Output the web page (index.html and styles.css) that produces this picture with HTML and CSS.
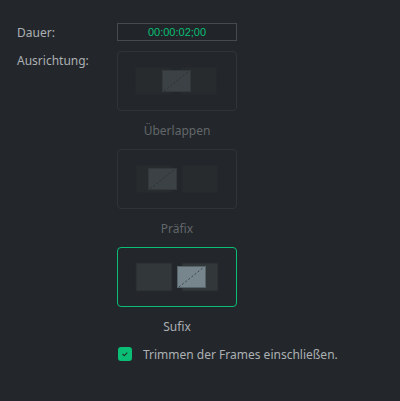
FILE: index.html
```html
<!DOCTYPE html>
<html lang="de">
<head>
  <meta charset="utf-8">
  <title>Übergang</title>
  <link rel="stylesheet" href="styles.css">
</head>
<body>

<form class="settings">
  <label class="name" for="duration">Dauer:</label>
  <input class="timecode" id="duration" type="text" value="00:00:02;00">

  <span class="name" id="align-name">Ausrichtung:</span>
  <div class="options" role="radiogroup" aria-labelledby="align-name">

    <label class="option">
      <input type="radio" name="align" value="overlap">
      <span class="card">
        <svg viewBox="1 1 118 58" aria-hidden="true">
          <rect class="clip" x="18" y="16" width="37" height="28"/>
          <rect class="clip" x="64" y="16" width="36" height="28"/>
          <rect class="fade" x="45.5" y="19.5" width="28" height="21"/>
          <path class="cut" d="M47 40L72 20"/>
        </svg>
      </span>
      <span class="caption">Überlappen</span>
    </label>

    <label class="option">
      <input type="radio" name="align" value="prefix">
      <span class="card">
        <svg viewBox="1 1 118 58" aria-hidden="true">
          <rect class="clip" x="19" y="16" width="36" height="28"/>
          <rect class="clip" x="65" y="16" width="36" height="28"/>
          <rect class="fade" x="31.5" y="19.5" width="28" height="21"/>
          <path class="cut" d="M33 40L58 20"/>
        </svg>
      </span>
      <span class="caption">Präfix</span>
    </label>

    <label class="option">
      <input type="radio" name="align" value="suffix" checked>
      <span class="card">
        <svg viewBox="1 1 118 58" aria-hidden="true">
          <rect class="clip" x="19" y="16" width="36" height="28"/>
          <rect class="clip" x="65" y="16" width="36" height="28"/>
          <rect class="fade" x="60.5" y="19.5" width="28" height="21"/>
          <path class="cut" d="M62 40L87 20"/>
        </svg>
      </span>
      <span class="caption">Sufix</span>
    </label>

  </div>

  <label class="trim">
    <input type="checkbox" checked>
    <svg class="box" viewBox="0 0 14 14" aria-hidden="true">
      <rect width="14" height="14" rx="3"/>
      <path d="M4.5 7L6.3 8.6L9.3 5.6"/>
    </svg>
    <span>Trimmen der Frames einschließen.</span>
  </label>
</form>

</body>
</html>
```
FILE: styles.css
```css
body {
  margin: 0;
  background: #23272b;
  color: #acb0b3;
  font: 12px/20px "Noto Sans", "Open Sans", sans-serif;
}

.settings {
  display: grid;
  grid-template-columns: 90px 1fr;
  gap: 8px 10px;
  align-items: start;
  padding: 23px 17px;
}

.timecode {
  box-sizing: border-box;
  width: 120px;
  height: 18px;
  padding: 0;
  border: 1px solid #46494d;
  background: #212529;
  color: #0abf75;
  font: 11px "Liberation Sans", Arial, sans-serif;
  text-align: center;
}

.options {
  width: 120px;
}

.option {
  display: block;
}

.option input, .trim input {
  position: absolute;
  opacity: 0;
}

.card {
  display: block;
  border: 1px solid #303438;
  border-radius: 4px;
}

.card svg {
  display: block;
}

.caption {
  display: block;
  padding-top: 2px;
  color: #62666a;
  line-height: 36px;
  text-align: center;
}

.clip {
  fill: #272b2e;
  stroke: #25292c;
}

.fade {
  fill: #3c4145;
  stroke: #33383b;
}

.cut {
  fill: none;
  stroke: #2b3033;
  stroke-dasharray: 2 2;
}

/* selected option */
.option input:checked + .card {
  border-color: #0abf75;
}

.option input:checked ~ .caption {
  color: #acb0b3;
}

.option input:checked + .card .clip {
  fill: #323739;
  stroke: #292d30;
}

.option input:checked + .card .fade {
  fill: #77858c;
  stroke: #56646a;
}

.option input:checked + .card .cut {
  stroke: #3c464b;
}

.trim {
  grid-column: 2;
  display: flex;
  gap: 11px;
  margin-top: -8px;
  padding-left: 1px;
}

.box {
  width: 14px;
  height: 14px;
  margin-top: 2px;
}

.box rect {
  fill: #0abf75;
}

.box path {
  fill: none;
  stroke: #20382f;
  stroke-width: 1.2;
}
```
